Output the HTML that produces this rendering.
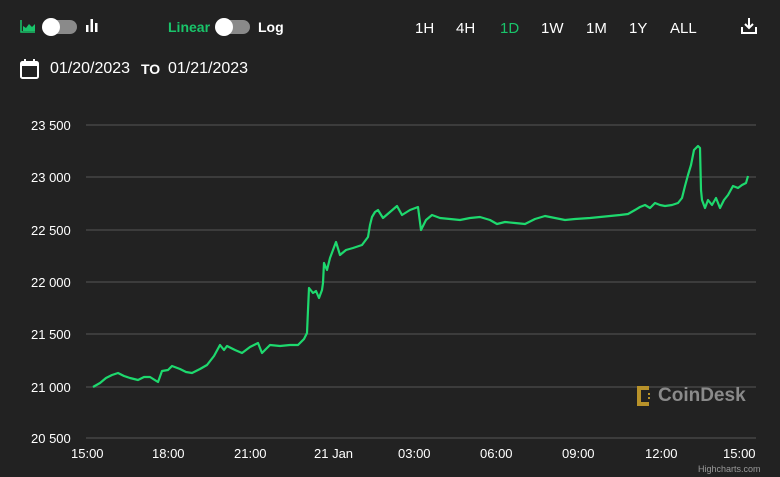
<!DOCTYPE html>
<html><head><meta charset="utf-8"><style>
body{margin:0;width:780px;height:477px;background:#222;font-family:"Liberation Sans",sans-serif;overflow:hidden;position:relative;color:#fff}
.t{position:absolute;font-size:14px;white-space:nowrap}
.b{font-weight:bold}
.ax{position:absolute;font-size:13px;color:#fff;white-space:nowrap}
.tg{position:absolute;width:34px;height:14px;border-radius:7px;background:#8a8a8a}
.tg:before{content:"";position:absolute;left:-1px;top:-2px;width:18px;height:18px;border-radius:50%;background:#fff}
</style></head><body>
<svg style="position:absolute;left:20px;top:19px" width="16" height="14" viewBox="0 0 16 14"><path d="M1 1V13H15" stroke="#19c46a" stroke-width="1.5" fill="none"/><path d="M3 12V7L6 9L9 5L12 8L15 5V12Z" fill="#19c46a"/></svg>
<div class="tg" style="left:43px;top:20px"></div>
<svg style="position:absolute;left:86px;top:18px" width="12" height="14"><rect x="0" y="7" width="2.5" height="7" fill="#fff"/><rect x="4.5" y="1" width="2.5" height="13" fill="#fff"/><rect x="9" y="5" width="2.5" height="9" fill="#fff"/></svg>
<div class="t b" style="left:168px;top:19px;color:#19c46a">Linear</div>
<div class="tg" style="left:216px;top:20px"></div>
<div class="t b" style="left:258px;top:19px">Log</div>
<div class="t" style="left:415px;top:20px;font-size:15px">1H</div>
<div class="t" style="left:456px;top:20px;font-size:15px">4H</div>
<div class="t" style="left:500px;top:20px;font-size:15px;color:#19c46a">1D</div>
<div class="t" style="left:541px;top:20px;font-size:15px">1W</div>
<div class="t" style="left:586px;top:20px;font-size:15px">1M</div>
<div class="t" style="left:629px;top:20px;font-size:15px">1Y</div>
<div class="t" style="left:670px;top:20px;font-size:15px">ALL</div>
<svg style="position:absolute;left:740px;top:17px" width="18" height="18" viewBox="0 0 18 18"><path d="M9 1V11M5 7L9 11L13 7M2 10V16H16V10" stroke="#fff" stroke-width="2" fill="none"/></svg>
<svg style="position:absolute;left:20px;top:59px" width="19" height="20" viewBox="0 0 19 20"><rect x="1" y="3" width="17" height="16" rx="1.5" stroke="#fff" stroke-width="2" fill="none"/><rect x="1" y="3" width="17" height="4" fill="#fff"/><rect x="4" y="0" width="2" height="4" fill="#fff"/><rect x="13" y="0" width="2" height="4" fill="#fff"/></svg>
<div class="t" style="left:50px;top:60px;font-size:16px">01/20/2023</div>
<div class="t b" style="left:141px;top:61px;font-size:14px">TO</div>
<div class="t" style="left:168px;top:60px;font-size:16px">01/21/2023</div>
<svg style="position:absolute;left:0;top:0" width="780" height="477">
<g stroke="#444" stroke-width="1.5">
<line x1="86" y1="125" x2="756" y2="125"/><line x1="86" y1="177" x2="756" y2="177"/><line x1="86" y1="230" x2="756" y2="230"/><line x1="86" y1="282" x2="756" y2="282"/><line x1="86" y1="334" x2="756" y2="334"/><line x1="86" y1="387" x2="756" y2="387"/><line x1="86" y1="438" x2="756" y2="438"/>
</g>
<polyline fill="none" stroke="#1ed96e" stroke-width="2.2" stroke-linejoin="round" points="93,387 100,383 106,378 112,375 118,373 124,376 130,378 138,380 144,377 150,377 158,382 162,371 168,370 172,366 180,369 186,372 192,373 200,369 207,365 214,356 220,345 224,350 227,346 235,350 242,353 250,347 258,343 262,353 270,345 280,346 290,345 298,345 304,339 307,333 308,310 309,288 313,293 316,291 319,298 322,290 323,283 324,263 327,270 330,258 336,242 340,255 346,250 353,248 362,245 368,237 370,225 372,217 375,212 378,210 383,218 390,212 397,206 402,215 410,210 418,207 421,230 426,220 432,215 440,218 450,219 460,220 470,218 480,217 490,220 497,224 505,222 515,223 525,224 535,219 545,216 555,218 565,220 575,219 590,218 600,217 610,216 620,215 628,214 635,210 640,207 645,205 650,208 655,203 660,205 665,206 672,205 678,203 682,198 685,186 688,175 691,165 694,150 698,146 700,148 701,190 702,200 705,208 708,200 712,205 716,198 720,208 724,200 728,195 733,186 738,188 742,185 746,183 748,176"/>
<g fill="#b8922a"><rect x="637" y="386" width="4" height="20"/><rect x="637" y="386" width="12" height="4"/><rect x="637" y="402" width="12" height="4"/><rect x="648" y="393" width="2" height="2"/><rect x="648" y="397" width="2" height="2"/></g>
</svg>
<div class="t b" style="left:658px;top:385px;font-size:19px;color:#8a8a8a">CoinDesk</div>
<div class="ax" style="left:31px;top:118px">23 500</div>
<div class="ax" style="left:31px;top:170px">23 000</div>
<div class="ax" style="left:31px;top:223px">22 500</div>
<div class="ax" style="left:31px;top:275px">22 000</div>
<div class="ax" style="left:31px;top:327px">21 500</div>
<div class="ax" style="left:31px;top:380px">21 000</div>
<div class="ax" style="left:31px;top:431px">20 500</div>
<div class="ax" style="left:71px;top:446px">15:00</div>
<div class="ax" style="left:152px;top:446px">18:00</div>
<div class="ax" style="left:234px;top:446px">21:00</div>
<div class="ax" style="left:314px;top:446px">21 Jan</div>
<div class="ax" style="left:398px;top:446px">03:00</div>
<div class="ax" style="left:480px;top:446px">06:00</div>
<div class="ax" style="left:562px;top:446px">09:00</div>
<div class="ax" style="left:645px;top:446px">12:00</div>
<div class="ax" style="left:723px;top:446px">15:00</div>
<div class="ax" style="left:698px;top:464px;font-size:9px;color:#999">Highcharts.com</div>
</body></html>
